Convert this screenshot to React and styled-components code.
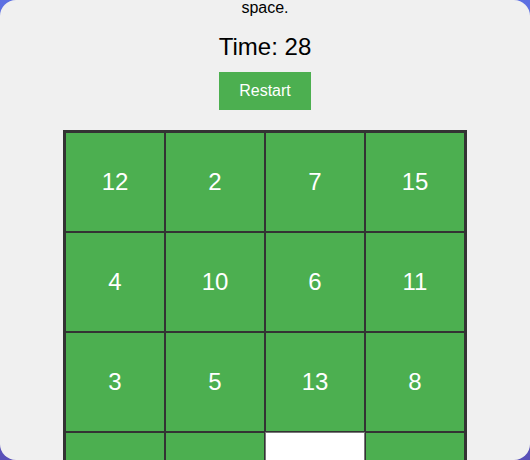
import React, { useState, useEffect } from 'react';
import styled, { createGlobalStyle } from 'styled-components';

const GlobalStyle = createGlobalStyle`
  html, body {
    margin: 0;
    padding: 0;
    height: 100%;
  }
  body {
    background: linear-gradient(180deg, #5d70e2 0%, #5950b8 100%);
    font-family: 'Liberation Sans', Arial, sans-serif;
  }
  #root {
    height: 100%;
  }
`;

const Card = styled.div`
  height: 100vh;
  box-sizing: border-box;
  background: #f0f0f0;
  border-radius: 16px;
  overflow: hidden;
  display: flex;
  flex-direction: column;
  justify-content: center;
  align-items: center;
  padding: 20px;
`;

const Title = styled.h1`
  font-size: 28px;
  font-weight: 700;
  color: #222;
  margin: 0 0 23px;
  flex-shrink: 0;
`;

const Instructions = styled.p`
  font-size: 16px;
  color: #000;
  text-align: center;
  margin: 0 0 16px;
  flex-shrink: 0;
`;

const Timer = styled.div`
  font-size: 24px;
  color: #000;
  margin: 0 0 11px;
  flex-shrink: 0;
`;

const RestartButton = styled.button`
  font-family: 'Liberation Sans', Arial, sans-serif;
  font-size: 16px;
  line-height: 18px;
  padding: 10px 20px;
  background: #4caf50;
  color: #fff;
  border: 0;
  border-radius: 0;
  cursor: pointer;
  flex-shrink: 0;
`;

const Board = styled.div`
  display: grid;
  grid-template-columns: repeat(4, 100px);
  grid-template-rows: repeat(4, 100px);
  border: 2px solid #333;
  margin-top: 20px;
  flex-shrink: 0;
`;

const Tile = styled.div`
  box-sizing: border-box;
  display: flex;
  align-items: center;
  justify-content: center;
  font-size: 24px;
  color: #fff;
  background: ${(p) => (p.$empty ? '#fff' : '#4caf50')};
  border: 1px solid ${(p) => (p.$empty ? '#777' : '#333')};
  cursor: ${(p) => (p.$empty ? 'default' : 'pointer')};
`;

const START = [12, 2, 7, 15, 4, 10, 6, 11, 3, 5, 13, 8, 1, 9, 0, 14];

export default function App() {
  const [tiles, setTiles] = useState(START);
  const [time, setTime] = useState(28);

  useEffect(() => {
    const id = setInterval(() => setTime((t) => t), 1000);
    return () => clearInterval(id);
  }, []);

  const move = (i) => {
    const e = tiles.indexOf(0);
    const r = Math.floor(i / 4), c = i % 4;
    const er = Math.floor(e / 4), ec = e % 4;
    if (Math.abs(r - er) + Math.abs(c - ec) !== 1) return;
    const next = [...tiles];
    next[e] = next[i];
    next[i] = 0;
    setTiles(next);
  };

  return (
    <>
      <GlobalStyle />
      <Card>
        <Title>15 Puzzle</Title>
        <Instructions>
          Click a tile next to the empty square to slide it into the empty
          <br />
          space.
        </Instructions>
        <Timer>Time: {time}</Timer>
        <RestartButton onClick={() => { setTiles(START); setTime(0); }}>Restart</RestartButton>
        <Board>
          {tiles.map((n, i) => (
            <Tile key={i} $empty={n === 0} onClick={() => move(i)}>
              {n !== 0 ? n : ''}
            </Tile>
          ))}
        </Board>
      </Card>
    </>
  );
}
